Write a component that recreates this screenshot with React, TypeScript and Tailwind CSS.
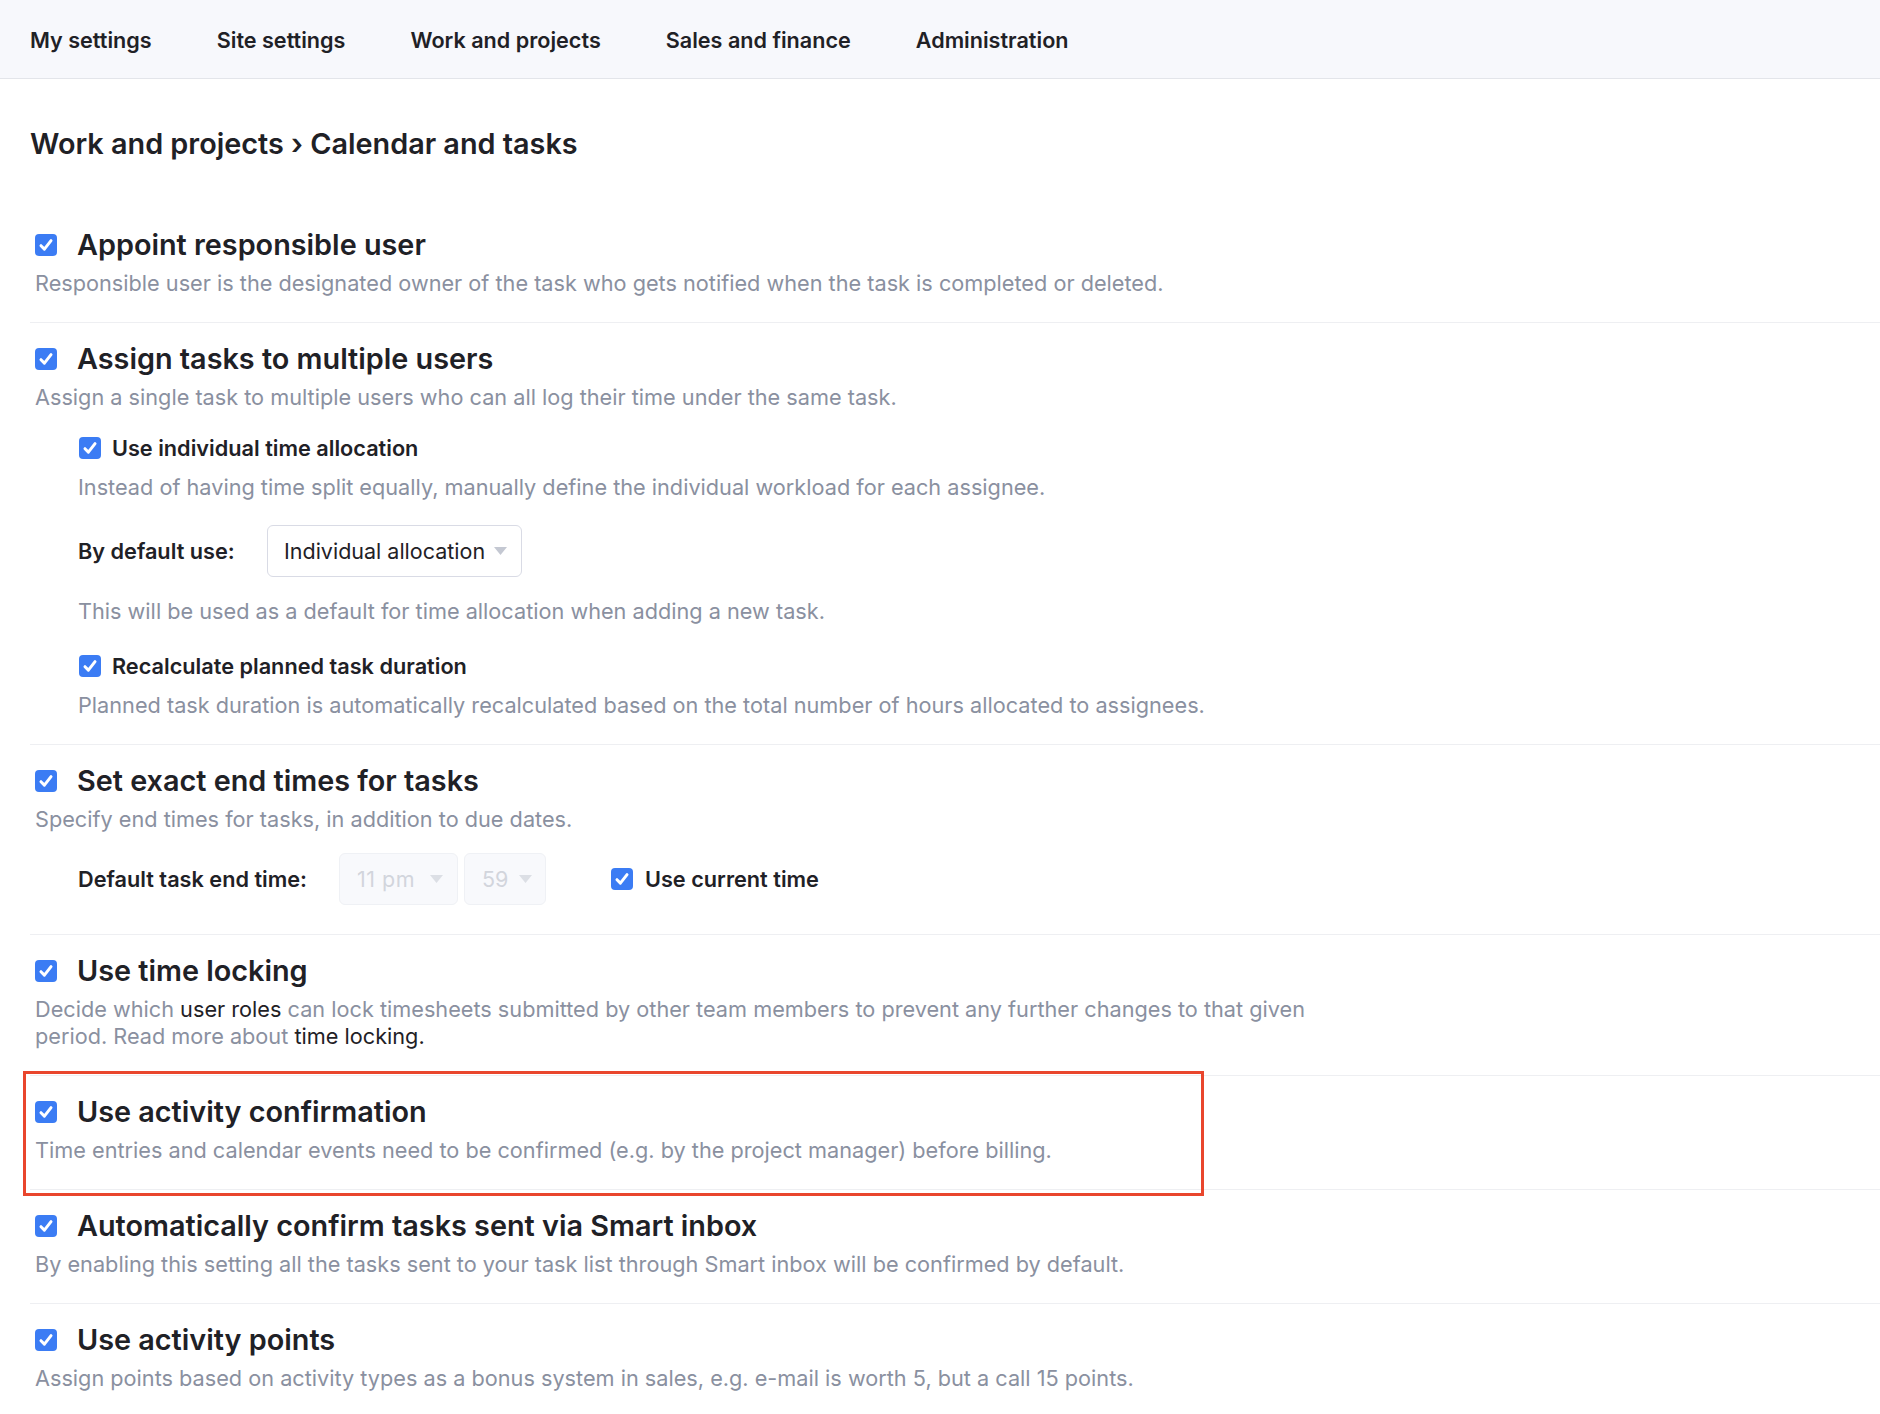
import React from "react";

function Check({ className = "" }: { className?: string }) {
  return (
    <span
      className={
        "flex h-[22px] w-[22px] shrink-0 items-center justify-center rounded-[4px] bg-[#3b7cf4] " +
        className
      }
    >
      <svg width="16" height="16" viewBox="0 0 14 14" fill="none">
        <path
          d="M2.6 7.6 L5.6 10.6 L11.4 3.2"
          stroke="white"
          strokeWidth="2.6"
          strokeLinecap="round"
          strokeLinejoin="round"
        />
      </svg>
    </span>
  );
}

function Caret({ color = "#c4c8d2" }: { color?: string }) {
  return (
    <svg width="13" height="8" viewBox="0 0 13 8">
      <path d="M0 0 H13 L6.5 8 Z" fill={color} />
    </svg>
  );
}

function Heading({ children }: { children: React.ReactNode }) {
  return (
    <div className="ml-[5px] flex items-center gap-[20px]">
      <Check />
      <h2 className="text-[28.8px] font-semibold leading-[34px] text-[#1f2126]">{children}</h2>
    </div>
  );
}

function Desc({ children, className = "" }: { children: React.ReactNode; className?: string }) {
  return (
    <p className={"text-[21.7px] leading-[27px] text-[#8a90a0] " + className}>{children}</p>
  );
}

function SubCheck({ children, className = "" }: { children: React.ReactNode; className?: string }) {
  return (
    <div className={"ml-[49px] flex h-[24px] items-center gap-[11px] " + className}>
      <Check />
      <span className="text-[21.7px] font-semibold leading-[24px] text-[#1f2126]">{children}</span>
    </div>
  );
}

function Section({
  children,
  last = false,
  className = "",
}: {
  children: React.ReactNode;
  last?: boolean;
  className?: string;
}) {
  return (
    <section
      className={
        "relative pt-[19px] " + (last ? "pb-[25px] " : "border-b border-[#eeeff2] ") + className
      }
    >
      {children}
    </section>
  );
}

export default function App() {
  const nav = ["My settings", "Site settings", "Work and projects", "Sales and finance", "Administration"];
  return (
    <div className="min-h-screen bg-white font-['Inter',sans-serif] text-[#1f2126]">
      <nav className="flex h-[79px] items-center gap-[65px] border-b border-[#e3e5ea] bg-[#f7f8fc] pl-[30px] pt-[2px]">
        {nav.map((n) => (
          <span key={n} className="text-[21.6px] font-semibold leading-[28px] text-[#1f2126]">
            {n}
          </span>
        ))}
      </nav>

      <main className="pl-[30px]">
        <h1 className="mt-[48px] text-[28.8px] font-semibold leading-[34px] text-[#1f2126]">
          Work and projects › Calendar and tasks
        </h1>

        <div className="mt-[48px]">
          <Section className="pb-[25px]">
            <Heading>Appoint responsible user</Heading>
            <Desc className="ml-[5px] mt-[8px]">
              Responsible user is the designated owner of the task who gets notified when the task is completed or deleted.
            </Desc>
          </Section>

          <Section className="pb-[25px]">
            <Heading>Assign tasks to multiple users</Heading>
            <Desc className="ml-[5px] mt-[8px]">
              Assign a single task to multiple users who can all log their time under the same task.
            </Desc>
            <SubCheck className="mt-[25px]">Use individual time allocation</SubCheck>
            <Desc className="ml-[48px] mt-[14px]">
              Instead of having time split equally, manually define the individual workload for each assignee.
            </Desc>
            <div className="ml-[48px] mt-[24px] flex items-center">
              <span className="w-[189px] text-[21.7px] font-semibold leading-[26px] text-[#1f2126]">By default use:</span>
              <div className="flex h-[52px] w-[255px] items-center justify-between rounded-[6px] border border-[#d9dbe5] bg-white pl-[16px] pr-[14px]">
                <span className="text-[21.5px] leading-[26px] text-[#1f2126]">Individual allocation</span>
                <Caret />
              </div>
            </div>
            <Desc className="ml-[48px] mt-[21px]">
              This will be used as a default for time allocation when adding a new task.
            </Desc>
            <SubCheck className="mt-[29px]">Recalculate planned task duration</SubCheck>
            <Desc className="ml-[48px] mt-[14px]">
              Planned task duration is automatically recalculated based on the total number of hours allocated to assignees.
            </Desc>
          </Section>

          <Section className="pb-[29px]">
            <Heading>Set exact end times for tasks</Heading>
            <Desc className="ml-[5px] mt-[8px]">Specify end times for tasks, in addition to due dates.</Desc>
            <div className="ml-[48px] mt-[20px] flex items-center">
              <span className="w-[261px] text-[21.7px] font-semibold leading-[26px] text-[#1f2126]">Default task end time:</span>
              <div className="flex h-[52px] w-[119px] items-center justify-between rounded-[6px] border border-[#eff1f5] bg-[#f8f9fc] pl-[17px] pr-[14px]">
                <span className="text-[21.5px] leading-[26px] tracking-[0.5px] text-[#d2d5dc]">11 pm</span>
                <Caret color="#dcdfe5" />
              </div>
              <div className="ml-[6px] flex h-[52px] w-[82px] items-center justify-between rounded-[6px] border border-[#eff1f5] bg-[#f8f9fc] pl-[17px] pr-[13px]">
                <span className="text-[21.5px] leading-[26px] text-[#d2d5dc]">59</span>
                <Caret color="#dcdfe5" />
              </div>
              <div className="ml-[65px] flex items-center gap-[12px]">
                <Check />
                <span className="text-[21.7px] font-semibold leading-[26px] text-[#1f2126]">Use current time</span>
              </div>
            </div>
          </Section>

          <Section className="pb-[25px]">
            <Heading>Use time locking</Heading>
            <Desc className="ml-[5px] mt-[8px] w-[1300px]">
              Decide which <span className="text-[#1f2126]">user roles</span> can lock timesheets submitted by other team members to prevent any further changes to that given period. Read more about{" "}
              <span className="text-[#1f2126]">time locking.</span>
            </Desc>
          </Section>

          <Section className="pb-[25px]">
            <div className="pointer-events-none absolute left-[-7px] top-[-5px] h-[125px] w-[1181px] border-[3px] border-[#e9462d]" />
            <Heading>Use activity confirmation</Heading>
            <Desc className="ml-[5px] mt-[8px]">
              Time entries and calendar events need to be confirmed (e.g. by the project manager) before billing.
            </Desc>
          </Section>

          <Section className="pb-[25px]">
            <Heading>Automatically confirm tasks sent via Smart inbox</Heading>
            <Desc className="ml-[5px] mt-[8px]">
              By enabling this setting all the tasks sent to your task list through Smart inbox will be confirmed by default.
            </Desc>
          </Section>

          <Section last>
            <Heading>Use activity points</Heading>
            <Desc className="ml-[5px] mt-[8px]">
              Assign points based on activity types as a bonus system in sales, e.g. e-mail is worth 5, but a call 15 points.
            </Desc>
          </Section>
        </div>
      </main>
    </div>
  );
}
